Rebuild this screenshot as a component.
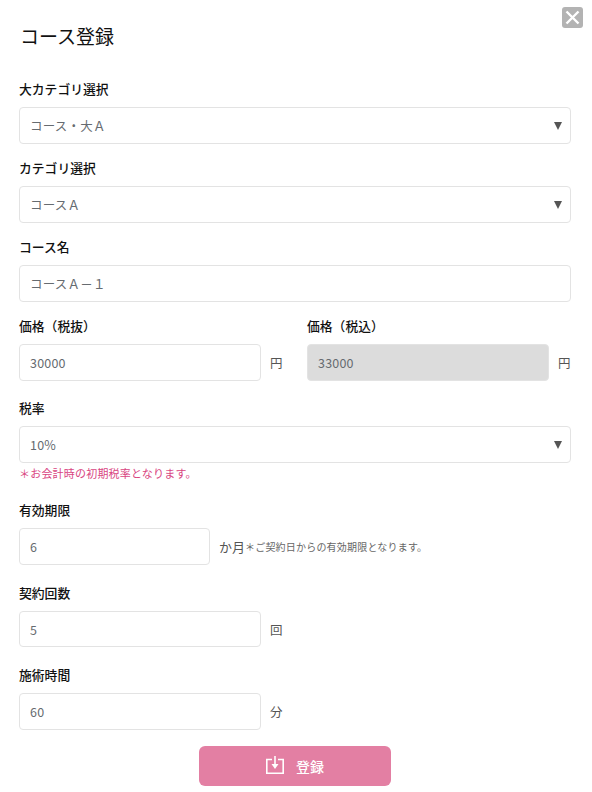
<script lang="ts">
	const cjk = ['円', '回', '分'];
</script>

<main class="modal">
	<button class="close" type="button" aria-label="閉じる">
		<svg viewBox="0 0 21 21" width="21" height="21">
			<path d="M4.5 4.5l12 12M16.5 4.5l-12 12" stroke="#fff" stroke-width="2.4" fill="none" />
		</svg>
	</button>
	<h1 class="title">コース登録</h1>

	<form class="form">
		<div class="group">
			<label class="label" for="big">大カテゴリ選択</label>
			<div class="select-wrap">
				<select id="big" class="field"><option>コース・大Ａ</option></select>
			</div>
		</div>

		<div class="group">
			<label class="label" for="cat">カテゴリ選択</label>
			<div class="select-wrap">
				<select id="cat" class="field"><option>コースＡ</option></select>
			</div>
		</div>

		<div class="group">
			<label class="label" for="name">コース名</label>
			<input id="name" class="field" value="コースＡ－１" />
		</div>

		<div class="group price-row">
			<div class="price">
				<label class="label" for="ex">価格（税抜）</label>
				<div class="with-unit">
					<input id="ex" class="field" value="30000" />
					<span class="unit">{cjk[0]}</span>
				</div>
			</div>
			<div class="price">
				<label class="label" for="inc">価格（税込）</label>
				<div class="with-unit">
					<input id="inc" class="field disabled" value="33000" disabled />
					<span class="unit">{cjk[0]}</span>
				</div>
			</div>
		</div>

		<div class="group tax">
			<label class="label" for="rate">税率</label>
			<div class="select-wrap">
				<select id="rate" class="field"><option>10%</option></select>
			</div>
			<p class="note">＊お会計時の初期税率となります。</p>
		</div>

		<div class="group roomy">
			<label class="label" for="term">有効期限</label>
			<div class="with-unit">
				<input id="term" class="field term" value="6" />
				<span class="unit months">か月</span>
				<span class="hint">＊ご契約日からの有効期限となります。</span>
			</div>
		</div>

		<div class="group roomy">
			<label class="label" for="count">契約回数</label>
			<div class="with-unit">
				<input id="count" class="field short" value="5" />
				<span class="unit">{cjk[1]}</span>
			</div>
		</div>

		<div class="group">
			<label class="label" for="time">施術時間</label>
			<div class="with-unit">
				<input id="time" class="field" value="60" />
				<span class="unit">{cjk[2]}</span>
			</div>
		</div>

		<button class="submit" type="button">
			<svg viewBox="0 0 18 18" width="18" height="18">
				<path d="M6 3.5H.8v13.7h16.4V3.5H12" stroke="#fff" stroke-width="1.6" fill="none" />
				<path d="M9 0v8.5" stroke="#fff" stroke-width="1.6" fill="none" />
				<path d="M5.5 8h7L9 13z" fill="#fff" />
			</svg>
			<span>登録</span>
		</button>
	</form>
</main>

<style>
	:global(body) {
		margin: 0;
		background: #fff;
	}

	.modal {
		position: relative;
		box-sizing: border-box;
		width: 592px;
		height: 792px;
		padding: 21px 21px 0 19px;
		font-family: "Noto Sans CJK JP", "Noto Sans", sans-serif;
		color: #212529;
		overflow: hidden;
	}

	.close {
		position: absolute;
		top: 7px;
		right: 9px;
		width: 21px;
		height: 21px;
		padding: 0;
		border: 0;
		border-radius: 3px;
		background: #b3b3b3;
		line-height: 0;
	}

	.title {
		margin: 0 0 29px;
		padding-left: 1px;
		font-size: 19px;
		font-weight: 400;
		line-height: 30px;
		color: #111;
	}

	.group {
		margin-bottom: 15px;
	}

	.roomy {
		margin-bottom: 19px;
	}

	.label {
		display: block;
		margin-bottom: 10px;
		font-size: 12.8px;
		font-weight: 500;
		line-height: 17px;
		color: #111;
	}

	.field {
		display: block;
		box-sizing: border-box;
		width: 100%;
		height: 37px;
		padding: 0 10px;
		border: 1px solid #e3e3e3;
		border-radius: 4px;
		background: #fff;
		font-family: inherit;
		font-size: 12.5px;
		letter-spacing: .2px;
		color: #666b70;
		appearance: none;
		outline: none;
	}

	.short {
		height: 36px;
	}

	.disabled {
		background: #dcdcdc;
		color: #666b70;
	}

	.select-wrap {
		position: relative;
	}

	.select-wrap::after {
		content: '';
		position: absolute;
		top: 15px;
		right: 9px;
		border-style: solid;
		border-width: 8px 4px 0;
		border-color: #555 transparent transparent;
	}

	.price-row {
		display: flex;
		gap: 24px;
		margin-bottom: 18px;
	}

	.price {
		width: 264px;
	}

	.with-unit {
		display: flex;
		align-items: center;
	}

	.with-unit .field {
		flex: none;
		width: 242px;
	}

	.with-unit .term {
		width: 191px;
	}

	.unit {
		margin-left: 9px;
		font-size: 12.5px;
		color: #555;
		white-space: nowrap;
	}

	.months {
		margin-left: 9px;
		font-size: 13px;
	}

	.hint {
		font-size: 10px;
		letter-spacing: .2px;
		color: #666;
		white-space: nowrap;
	}

	.tax {
		margin-bottom: 20px;
	}

	.note {
		margin: 2px 0 0;
		font-size: 11px;
		letter-spacing: .2px;
		line-height: 16px;
		color: #d9457f;
	}

	.submit {
		display: flex;
		align-items: center;
		justify-content: center;
		gap: 12px;
		width: 192px;
		height: 40px;
		margin: 16px auto 0;
		padding: 0;
		border: 0;
		border-radius: 6px;
		background: #e37fa3;
		font-family: inherit;
		font-size: 14px;
		font-weight: 500;
		color: #fff;
	}

	.submit svg {
		margin-bottom: 3px;
	}
</style>
